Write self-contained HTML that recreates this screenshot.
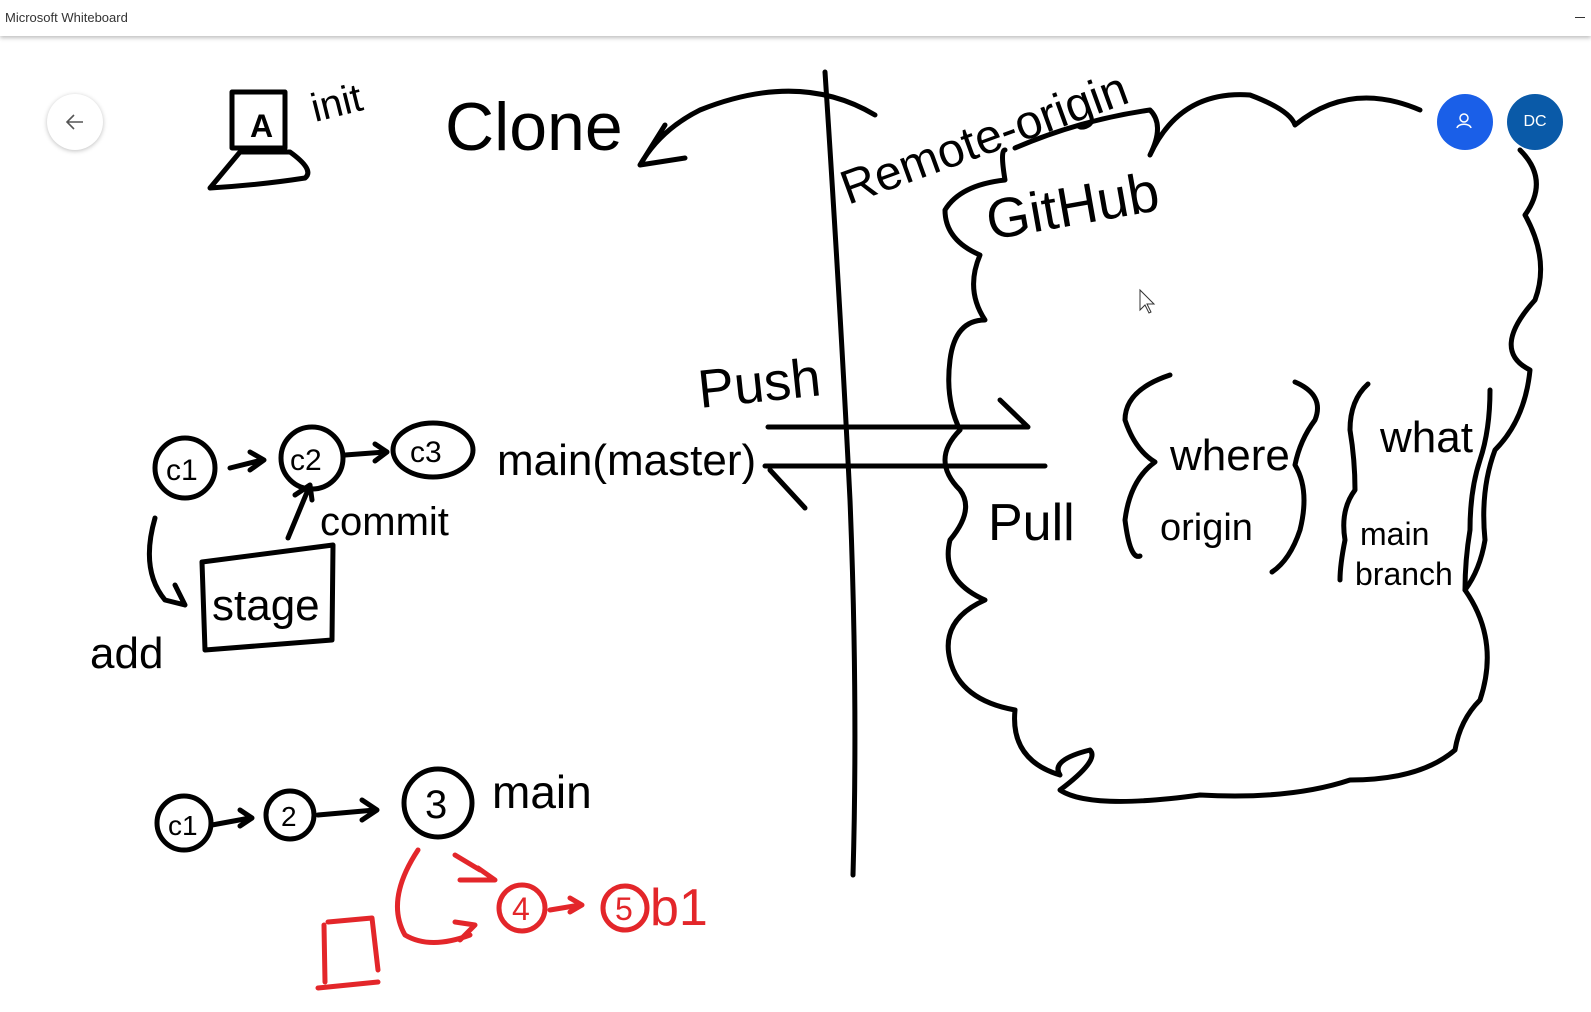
<!DOCTYPE html>
<html><head><meta charset="utf-8"><style>
html,body{margin:0;padding:0;width:1591px;height:1012px;overflow:hidden;background:#fff;font-family:"Liberation Sans",sans-serif}
.bar{position:absolute;left:0;top:0;width:1591px;height:36px;background:#fff;box-shadow:0 2px 4px rgba(0,0,0,.25);z-index:2}
.bar span{position:absolute;left:5px;top:10px;font-size:13px;color:#333}
.bar i{position:absolute;right:6px;top:17px;width:10px;height:1px;background:#333}
svg{position:absolute;left:0;top:0}
.back{position:absolute;left:47px;top:94px;width:56px;height:56px;border-radius:50%;background:#fff;box-shadow:0 1px 5px rgba(0,0,0,.25);z-index:2}
.av{position:absolute;width:56px;height:56px;border-radius:50%;color:#fff;font-size:16px;display:flex;align-items:center;justify-content:center;z-index:2}
</style></head><body>
<div class="bar"><span>Microsoft Whiteboard</span><i></i></div>
<div class="back"><svg width="56" height="56"><path d="M36 28H20M27 21l-7 7 7 7" fill="none" stroke="#555" stroke-width="1.6"/></svg></div>
<div class="av" style="left:1437px;top:94px;background:#1a5fe8"><svg width="56" height="56"><circle cx="27" cy="24" r="4" fill="none" stroke="#fff" stroke-width="1.5"/><path d="M20 34c1-5 13-5 14 0" fill="none" stroke="#fff" stroke-width="1.5"/></svg></div>
<div class="av" style="left:1507px;top:94px;background:#0a5aa8">DC</div>
<svg width="1591" height="1012" fill="none" stroke="#000" stroke-width="5" stroke-linecap="round" stroke-linejoin="round">
<path d="M232 92H285V148H232Z M210 188L240 152H290Q315 170 305 178Q260 185 210 188Z"/>
<path d="M825 72Q840 300 850 500Q858 700 853 875"/>
<path d="M875 115Q800 70 700 110Q660 130 640 165M640 165L665 125M640 165L685 158"/>
<path d="M768 427H1028M1000 400L1028 427M765 466H1045M770 470L805 508"/>
<path d="M1015 148Q1080 120 1150 110Q1165 125 1150 155Q1180 90 1250 95Q1290 110 1295 125Q1350 80 1420 110M1520 150Q1550 180 1525 215Q1550 260 1535 300Q1490 350 1530 370Q1525 420 1495 450Q1480 490 1485 540Q1480 570 1465 590Q1500 640 1480 700Q1460 720 1455 750Q1420 780 1350 780Q1290 800 1200 795Q1090 810 1060 790Q1100 760 1090 750Q1050 760 1060 775Q1010 760 1015 710Q960 700 950 660Q940 620 985 600Q940 580 950 540Q975 510 960 490Q930 460 960 430Q945 400 950 360Q955 320 985 320Q965 290 980 255Q945 240 945 210Q960 185 1005 180Q1000 150 1005 150"/>
<path d="M202 562L333 545L332 640L205 650Z"/>
<path d="M288 538L310 485M295 495L310 485L312 500M155 518Q140 570 165 600L185 605M175 585L185 605"/>
<circle cx="185" cy="468" r="30"/><circle cx="312" cy="458" r="31"/><ellipse cx="433" cy="450" rx="40" ry="27"/>
<path d="M230 468L262 460M250 452L264 460L250 470M345 455L385 452M375 444L387 452L375 461"/>
<circle cx="184" cy="823" r="27"/><circle cx="290" cy="815" r="24"/><circle cx="438" cy="803" r="34"/>
<path d="M212 825L250 818M240 810L252 818L240 826M318 815L375 810M362 800L377 810L362 820"/>
<path d="M1170 375Q1125 390 1125 420Q1135 450 1155 462Q1130 480 1125 520Q1130 560 1140 556M1295 382Q1325 395 1315 420Q1300 440 1295 465Q1310 490 1300 530Q1290 560 1272 572M1368 384Q1350 400 1350 430Q1355 460 1355 490Q1340 510 1345 540Q1340 565 1340 580M1490 390Q1490 430 1480 460Q1470 490 1470 530Q1465 560 1465 590"/>
<g stroke="#e3262a"><circle cx="522" cy="908" r="23"/><circle cx="625" cy="908" r="22"/>
<path d="M418 850Q385 900 405 935Q430 950 470 935M455 922L475 925L460 940M455 855L480 870M460 880L495 880L478 868M550 910L580 905M570 898L582 905L570 912M328 922L372 918L378 970M324 925L325 982M318 988L378 982"/></g>
</svg>
<svg width="1591" height="1012" font-family="Liberation Sans,sans-serif" fill="#000">
<text x="250" y="137" font-size="32" font-weight="bold">A</text>
<text x="315" y="122" font-size="40" transform="rotate(-14 315 122)">init</text>
<text x="445" y="150" font-size="68">Clone</text>
<text x="848" y="205" font-size="48" transform="rotate(-20 848 205)">Remote-origin</text>
<text x="990" y="240" font-size="56" transform="rotate(-10 990 240)">GitHub</text>
<text x="700" y="408" font-size="54" transform="rotate(-6 700 408)">Push</text>
<text x="988" y="540" font-size="52">Pull</text>
<text x="1170" y="470" font-size="44">where</text>
<text x="1160" y="540" font-size="38">origin</text>
<text x="1380" y="452" font-size="44">what</text>
<text x="1360" y="545" font-size="32">main</text>
<text x="1355" y="585" font-size="32">branch</text>
<text x="166" y="480" font-size="30">c1</text>
<text x="290" y="470" font-size="30">c2</text>
<text x="410" y="462" font-size="30">c3</text>
<text x="497" y="475" font-size="44">main(master)</text>
<text x="320" y="535" font-size="40">commit</text>
<text x="212" y="620" font-size="44">stage</text>
<text x="90" y="668" font-size="44">add</text>
<text x="168" y="835" font-size="28">c1</text>
<text x="281" y="826" font-size="28">2</text>
<text x="425" y="818" font-size="40">3</text>
<text x="492" y="808" font-size="46">main</text>
<g fill="#e3262a"><text x="512" y="920" font-size="32">4</text><text x="615" y="920" font-size="32">5</text><text x="650" y="925" font-size="52">b1</text></g>
<path d="M1140 290v20l5-5 4 8 2-1-4-8h7z" fill="#fff" stroke="#333" stroke-width="1"/>
</svg>
</body></html>
